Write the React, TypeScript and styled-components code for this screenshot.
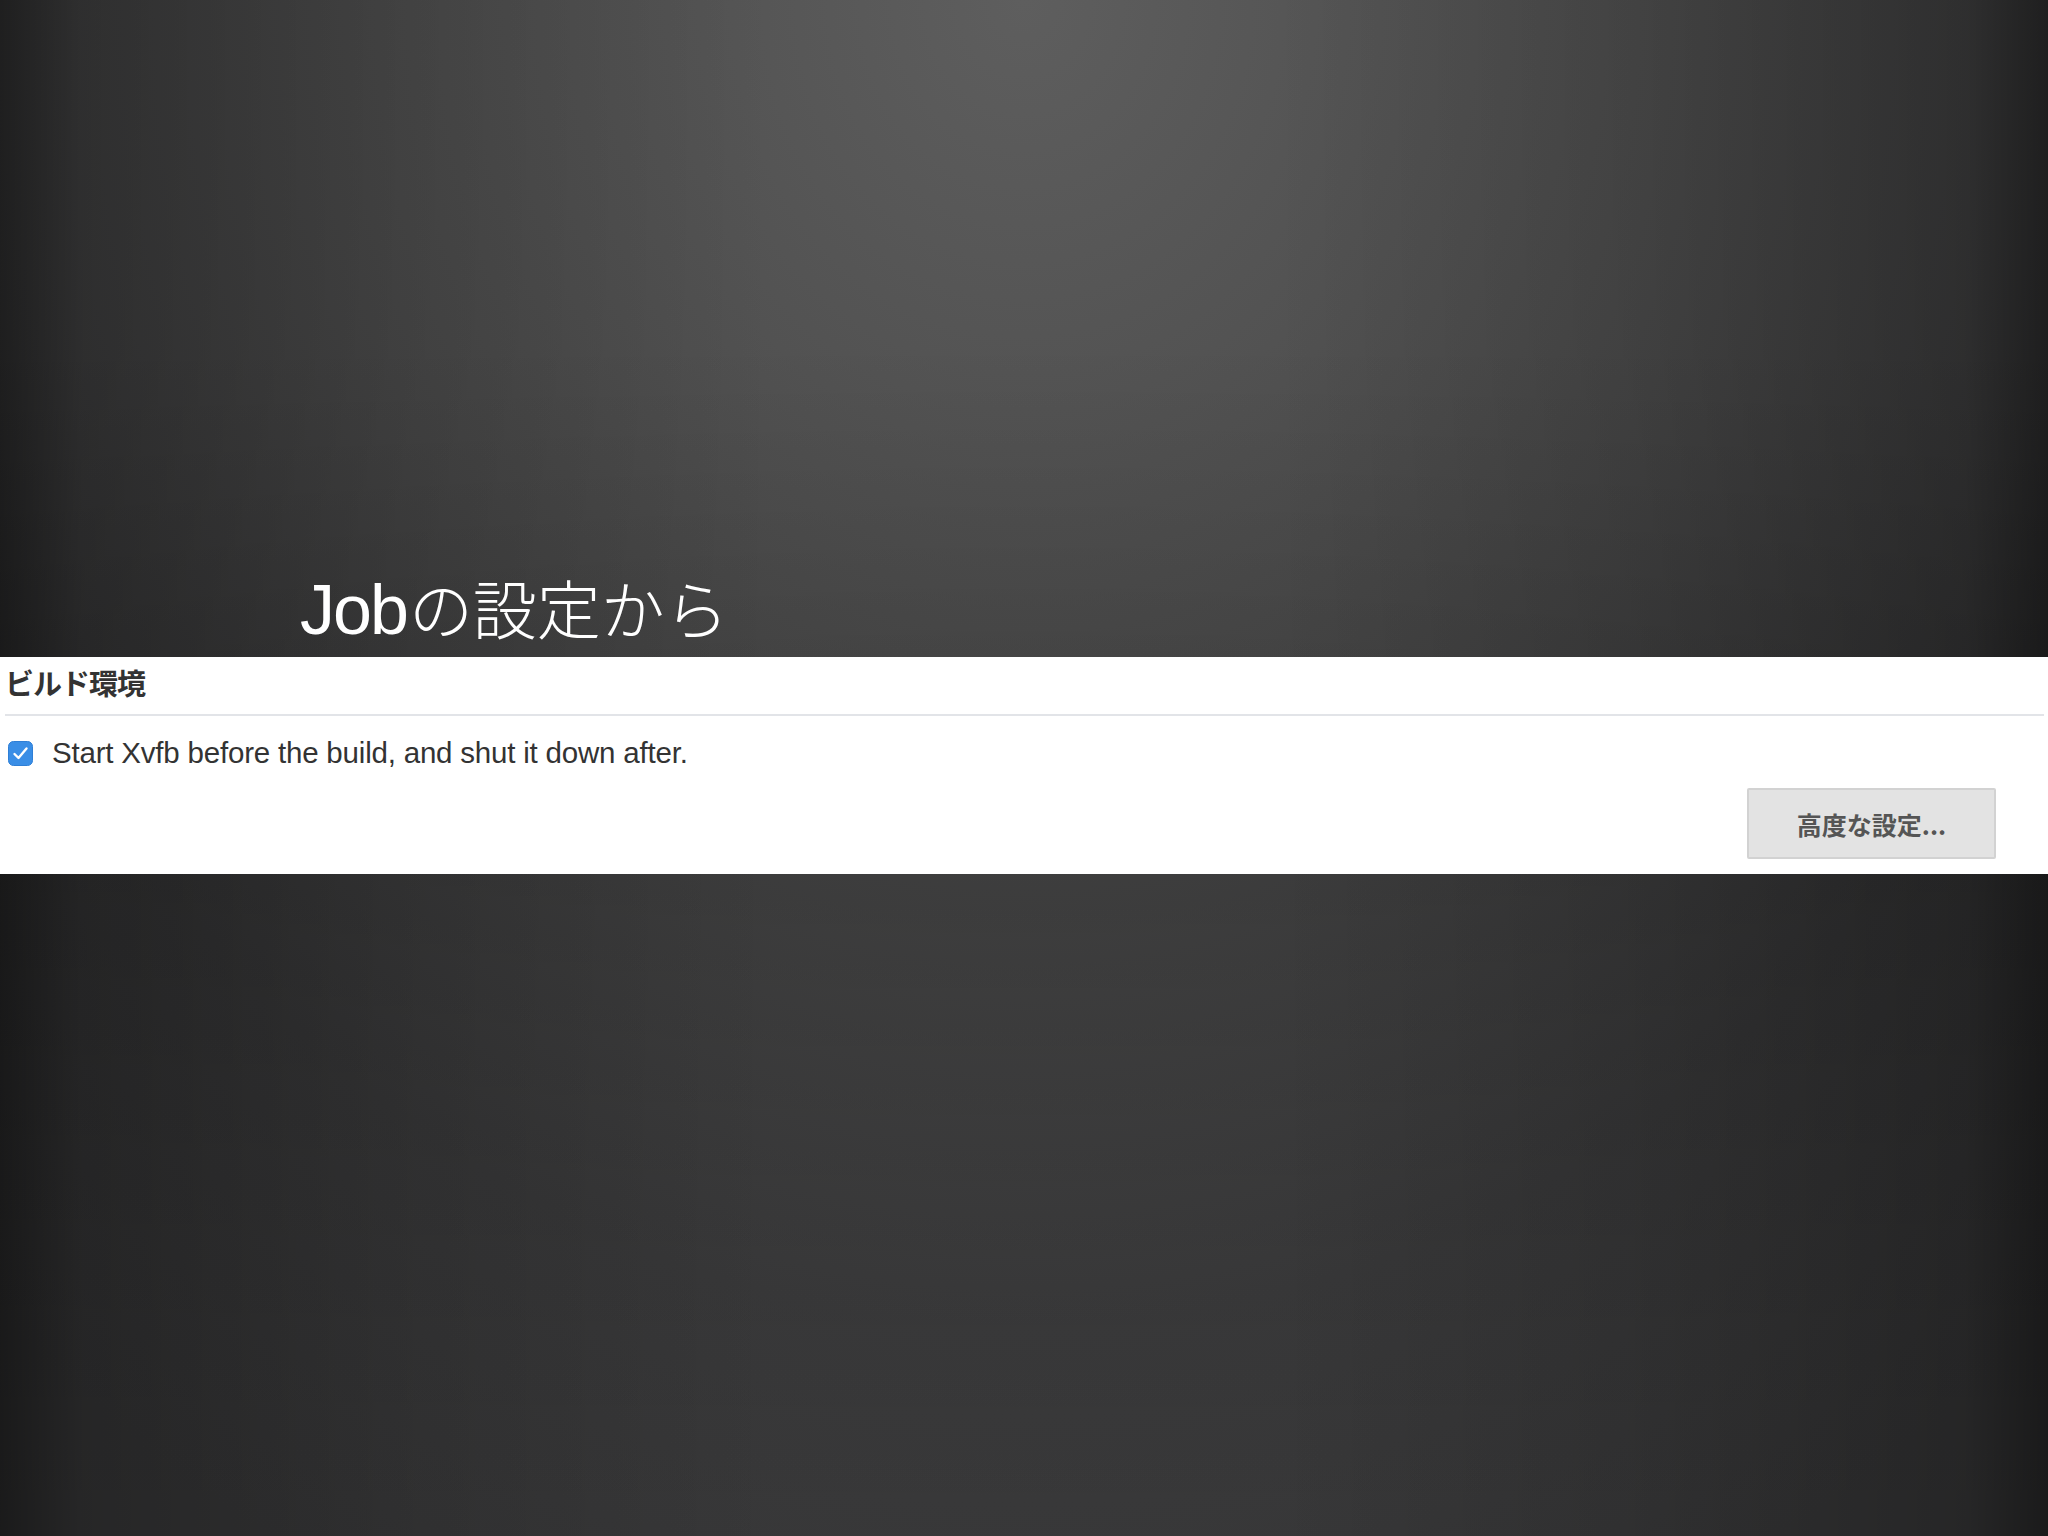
import styled, { createGlobalStyle } from "styled-components";

const GlobalStyle = createGlobalStyle`
  html, body {
    margin: 0;
    padding: 0;
  }
  body {
    font-family: "Liberation Sans", "Noto Sans CJK JP", sans-serif;
  }
`;

const App = () => {
  return (
    <>
      <GlobalStyle />
      <Slide>
        <Header>
          <Title>
            <Latin>Job</Latin>
            <Kana>の設定から</Kana>
          </Title>
        </Header>
        <Panel>
          <SectionTitle>ビルド環境</SectionTitle>
          <Divider />
          <CheckRow>
            <CheckBox viewBox="0 0 25 25">
              <rect x="0.5" y="0.5" width="24" height="24" rx="5" fill="#3a8ee6" stroke="#2f7fd6" />
              <path d="M6.5 13 L10.5 17 L18.5 7.5" fill="none" stroke="#fff" strokeWidth="2.4" strokeLinecap="round" strokeLinejoin="round" />
            </CheckBox>
            <CheckLabel>Start Xvfb before the build, and shut it down after.</CheckLabel>
          </CheckRow>
          <ButtonRow>
            <AdvancedButton>高度な設定...</AdvancedButton>
          </ButtonRow>
        </Panel>
        <Footer />
      </Slide>
    </>
  );
};

export default App;

const Slide = styled.div`
  display: flex;
  flex-direction: column;
  width: 2048px;
  height: 1536px;
  overflow: hidden;
  background:
    linear-gradient(
      to right,
      rgba(0, 0, 0, 0.5) 0%,
      rgba(0, 0, 0, 0.28) 4%,
      rgba(0, 0, 0, 0.12) 20%,
      rgba(0, 0, 0, 0) 38%,
      rgba(0, 0, 0, 0) 62%,
      rgba(0, 0, 0, 0.12) 80%,
      rgba(0, 0, 0, 0.28) 96%,
      rgba(0, 0, 0, 0.5) 100%
    ),
    linear-gradient(
      to bottom,
      rgba(0, 0, 0, 0) 0%,
      rgba(0, 0, 0, 0) 22%,
      rgba(0, 0, 0, 0.1) 42%,
      rgba(0, 0, 0, 0.14) 55%,
      rgba(0, 0, 0, 0) 100%
    ),
    radial-gradient(ellipse 75% 115% at 50% 0%, #5e5e5e 0%, #4b4b4b 40%, #3a3a3b 75%, #353536 100%);
`;

const Header = styled.div`
  height: 657px;
  display: flex;
  align-items: flex-end;
  padding-left: 300px;
  box-sizing: border-box;
  padding-bottom: 12px;
`;

const Title = styled.h1`
  margin: 0;
  color: #ffffff;
  font-weight: 400;
  line-height: 1;
  display: flex;
  align-items: baseline;
`;

const Latin = styled.span`
  font-family: "Liberation Sans", sans-serif;
  font-size: 70px;
  letter-spacing: -2px;
`;

const Kana = styled.span`
  font-family: "Noto Sans CJK JP", sans-serif;
  font-size: 64px;
  font-weight: 300;
  margin-left: 2px;
`;

const Panel = styled.div`
  background: #ffffff;
  display: flex;
  flex-direction: column;
  padding: 12px 4px 15px 5px;
`;

const SectionTitle = styled.div`
  font-family: "Liberation Sans", "Noto Sans CJK JP", sans-serif;
  font-size: 29px;
  font-weight: 700;
  color: #333333;
  line-height: 32px;
  letter-spacing: -1px;
`;

const Divider = styled.div`
  height: 2px;
  background: #e2e4e8;
  margin-top: 13px;
`;

const CheckRow = styled.div`
  display: flex;
  align-items: center;
  gap: 19px;
  margin-top: 23px;
  padding-left: 3px;
`;

const CheckBox = styled.svg`
  width: 25px;
  height: 25px;
  flex-shrink: 0;
`;

const CheckLabel = styled.span`
  font-size: 29.5px;
  color: #333333;
  line-height: 28px;
  letter-spacing: -0.2px;
`;

const ButtonRow = styled.div`
  display: flex;
  justify-content: flex-end;
  padding-right: 48px;
  margin-top: 21px;
`;

const AdvancedButton = styled.button`
  width: 249px;
  height: 71px;
  background: #e3e3e3;
  border: 2px solid #d2d2d2;
  border-radius: 2px;
  color: #555555;
  font-family: "Noto Sans CJK JP", sans-serif;
  font-size: 25px;
  font-weight: 700;
  padding: 0;
  cursor: pointer;
`;

const Footer = styled.div`
  flex: 1;
`;
